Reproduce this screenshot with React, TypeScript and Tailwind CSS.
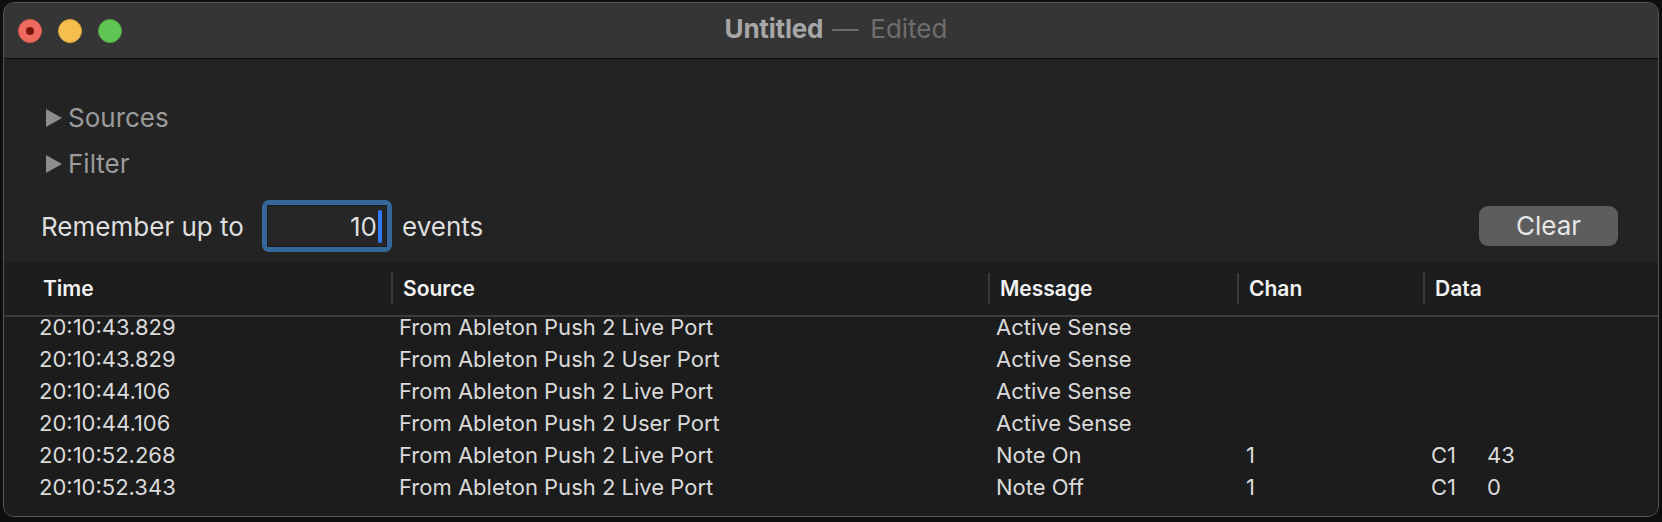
import React from "react";

const rows = [
  { t: "20:10:43.829", s: "From Ableton Push 2 Live Port", m: "Active Sense", c: "", d1: "", d2: "" },
  { t: "20:10:43.829", s: "From Ableton Push 2 User Port", m: "Active Sense", c: "", d1: "", d2: "" },
  { t: "20:10:44.106", s: "From Ableton Push 2 Live Port", m: "Active Sense", c: "", d1: "", d2: "" },
  { t: "20:10:44.106", s: "From Ableton Push 2 User Port", m: "Active Sense", c: "", d1: "", d2: "" },
  { t: "20:10:52.268", s: "From Ableton Push 2 Live Port", m: "Note On", c: "1", d1: "C1", d2: "43" },
  { t: "20:10:52.343", s: "From Ableton Push 2 Live Port", m: "Note Off", c: "1", d1: "C1", d2: "0" },
];

function Tri() {
  return (
    <svg width="16" height="18" viewBox="0 0 16 18" className="shrink-0">
      <path d="M0 0 L16 9 L0 18 Z" fill="#8c8c8c" />
    </svg>
  );
}

function HeaderCell({ label, first }: { label: string; first?: boolean }) {
  if (first) {
    return (
      <div className="flex items-center pl-[39px] w-[387px] shrink-0">
        <span>{label}</span>
      </div>
    );
  }
  return (
    <div className="flex items-center">
      <div className="w-[2px] h-[31px] bg-[#3a3a3a]" />
      <span className="ml-[10px]">{label}</span>
    </div>
  );
}

export default function App() {
  return (
    <div
      className="w-[1662px] h-[522px] bg-[#0e0e0e] pt-[2px] px-[3px] overflow-hidden"
      style={{ fontFamily: "Inter, 'Noto Sans', sans-serif" }}
    >
      <div className="h-[515px] rounded-[11px] border border-[#565656] overflow-hidden flex flex-col bg-[#232323]">
        {/* Title bar */}
        <div className="relative h-[55px] bg-[#353535] flex items-center shrink-0">
          <div className="flex items-center gap-[16px] pl-[14px] pt-[1px]">
            <div className="w-[24px] h-[24px] rounded-full bg-[#ee6a5f] border border-[#d8574d] flex items-center justify-center">
              <div className="w-[8px] h-[8px] rounded-full bg-[#7e150c]" />
            </div>
            <div className="w-[24px] h-[24px] rounded-full bg-[#f5bf4f] border border-[#d9a43f]" />
            <div className="w-[24px] h-[24px] rounded-full bg-[#61c554] border border-[#52a846]" />
          </div>
          <div className="absolute inset-0 flex items-center justify-center pointer-events-none leading-[32px] pl-[10px] pb-[3px]">
            <span className="text-[26px] font-bold text-[#a7a7a7] tracking-[-0.2px]">Untitled</span>
            <span className="text-[26px] text-[#6e6e6e] ml-[9px]">—</span>
            <span className="text-[26px] text-[#6e6e6e] ml-[12px]">Edited</span>
          </div>
        </div>
        <div className="h-px bg-[#0b0b0b] shrink-0" />

        {/* Content */}
        <div className="flex-1 flex flex-col">
          <div className="pt-[44px] pl-[42px] flex items-center gap-[6px] h-[74px] text-[26px] leading-[30px] text-[#9b9b9b]">
            <Tri />
            <span>Sources</span>
          </div>
          <div className="mt-[16px] pl-[42px] flex items-center gap-[6px] h-[30px] text-[26px] leading-[30px] text-[#9b9b9b]">
            <Tri />
            <span>Filter</span>
          </div>

          <div className="mt-[21px] h-[52px] flex items-center pl-[37px] pr-[40px] text-[26px] leading-[30px] text-[#dedede]">
            <div className="w-[221px] shrink-0 pt-[2px]">Remember up to</div>
            <div className="w-[130px] h-[52px] rounded-[7px] bg-[#35679a] p-[5px] shrink-0">
              <div className="w-full h-full bg-[#262626] border border-[#1c1c1c] flex items-center justify-end pr-[4px]">
                <span className="pt-[2px]">10</span>
                <div className="ml-[1px] w-[4px] h-[33px] rounded-full bg-[#2f7df6]" />
              </div>
            </div>
            <div className="ml-[10px] pt-[2px]">events</div>
            <div className="flex-1" />
            <div className="w-[139px] h-[40px] rounded-[9px] bg-[#5d5d5d] flex items-center justify-center text-[#e6e6e6]">
              Clear
            </div>
          </div>

          {/* Table */}
          <div className="mt-[10px] flex-1 flex flex-col bg-[#1c1c1c]">
            <div className="relative z-10 h-[53px] bg-[#1d1d1d] flex text-[21px] font-semibold text-[#f2f2f2] shrink-0">
              <HeaderCell label="Time" first />
              <div className="w-[597px] shrink-0 flex">
                <HeaderCell label="Source" />
              </div>
              <div className="w-[249px] shrink-0 flex">
                <HeaderCell label="Message" />
              </div>
              <div className="w-[186px] shrink-0 flex">
                <HeaderCell label="Chan" />
              </div>
              <div className="flex-1 flex">
                <HeaderCell label="Data" />
              </div>
            </div>
            <div className="relative z-10 h-[2px] bg-[#3a3a3a] shrink-0" />
            <div className="mt-[-6px] flex flex-col text-[22px] leading-[26px] text-[#dadada]">
              {rows.map((r, i) => (
                <div key={i} className="h-[32px] flex items-center">
                  <div className="w-[387px] shrink-0 pl-[35px]">{r.t}</div>
                  <div className="w-[597px] shrink-0 pl-[8px]">{r.s}</div>
                  <div className="w-[249px] shrink-0 pl-[8px]">{r.m}</div>
                  <div className="w-[186px] shrink-0 pl-[9px]">{r.c}</div>
                  <div className="flex-1 pl-[8px] flex">
                    <span className="w-[56px]">{r.d1}</span>
                    <span>{r.d2}</span>
                  </div>
                </div>
              ))}
            </div>
          </div>
        </div>
      </div>
    </div>
  );
}
